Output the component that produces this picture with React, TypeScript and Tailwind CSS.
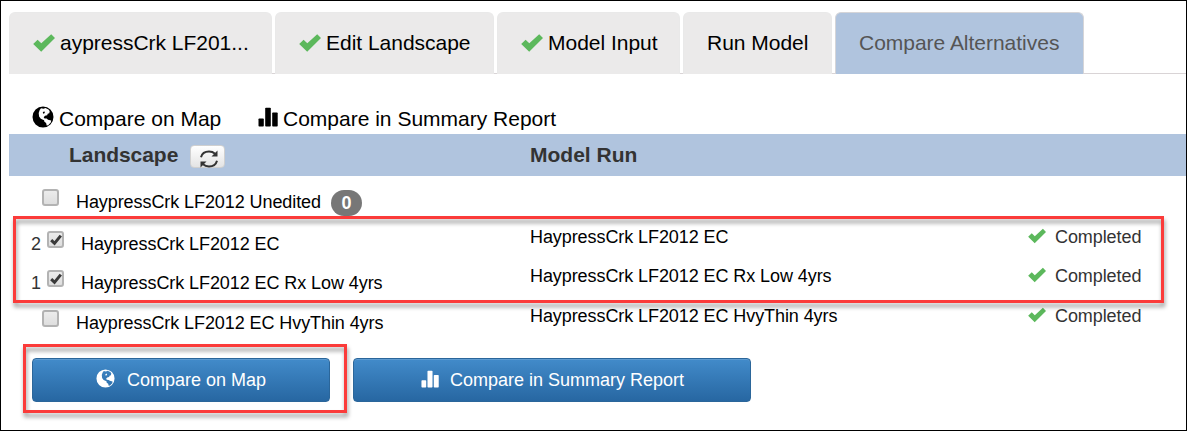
import type { ReactNode } from "react";

function Check({ className }: { className: string }) {
  return (
    <svg viewBox="0 0 22 18" className={className} fill="#5cb85c">
      <path d="M18.2 0.2 22 4 8.2 17.8 0.2 9.9 4.600 5.700 8.300 9.300Z" />
    </svg>
  );
}

function Globe({ className }: { className: string }) {
  return (
    <svg viewBox="0 0 22 22" className={className} fill="currentColor" fillRule="evenodd">
      <path d="M11 .5a10.500 10.500 0 1 0 0 21a10.500 10.500 0 0 0 0-21ZM9 2.300l2.500.5 2-.8 3 1.400 1.200 1.600-.4 2.200-1.600.6-.5 1.500-2.200.4-1.300 1.500.8 1.200 2.200.2 1.300 1.100 3.200.9-.4 1.900-2.600 2.700-1.500.2-.6-2.400-1.700-1.200-.3-1.500-3.300-1.600-1.700-2.300-.4-3.400 1-3ZM12.300 5.300l-1.500.9.4 1.500 1.700-.7Z" />
    </svg>
  );
}

function Bars({ className }: { className: string }) {
  return (
    <svg viewBox="0 0 20 20" className={className} fill="currentColor">
      <rect x="0.500" y="11.500" width="5.300" height="8" rx="0.8" />
      <rect x="7.200" y="0.800" width="5.600" height="18.700" rx="0.8" />
      <rect x="14.200" y="5.500" width="5.500" height="14" rx="0.8" />
    </svg>
  );
}

function Refresh() {
  return (
    <svg viewBox="0 0 20 20" className="h-5 w-5" fill="none" stroke="#333" strokeWidth="2">
      <path d="M2 8.300C3 4.500 6 2.600 10 2.600c2.600 0 4.500.8 6 2.200" />
      <path d="M18 11.700c-1 3.800-4 5.700-8 5.700-2.600 0-4.500-.8-6-2.200" />
      <path d="M18.500 1.500v6h-6Z" fill="#333" stroke="none" />
      <path d="M1.500 18.500v-6h6Z" fill="#333" stroke="none" />
    </svg>
  );
}

function Tab({ width, done, active, children }: { width: string; done?: boolean; active?: boolean; children: ReactNode }) {
  return (
    <div
      className={`${width} flex h-[62px] shrink-0 items-center rounded-t-md border border-b-0 pb-0.5 pl-[23px] text-[21px] ${
        active ? "border-[#d5d5d8] bg-[#b0c4de] text-[#555]" : "border-[#e9e9e9] bg-[#ebeaea] text-black"
      }`}
    >
      {done && <Check className="mr-[5px] h-[18px] w-[22px]" />}
      <span className="tracking-[-0.02px]">{children}</span>
    </div>
  );
}

function Checkbox({ checked }: { checked?: boolean }) {
  return (
    <span className="flex h-[17px] w-[17px] shrink-0 items-center justify-center rounded-[3px] border-2 border-[#b3b3b3] bg-linear-to-b from-[#ececec] to-[#dedede]">
      {checked && (
        <svg viewBox="0 0 12 12" className="h-3 w-3" fill="none" stroke="#3a3a3a" strokeWidth="3">
          <path d="M1.200 6.200 4.500 9.400 10.800 1.600" />
        </svg>
      )}
    </span>
  );
}

type Row = { height: string; order?: string; name: string; badge?: string; run?: string };

const rows: Row[] = [
  { height: "h-[42px]", name: "HaypressCrk LF2012 Unedited", badge: "0" },
  { height: "h-[39px]", order: "2", name: "HaypressCrk LF2012 EC", run: "HaypressCrk LF2012 EC" },
  { height: "h-[40px]", order: "1", name: "HaypressCrk LF2012 EC Rx Low 4yrs", run: "HaypressCrk LF2012 EC Rx Low 4yrs" },
  { height: "h-[40px]", name: "HaypressCrk LF2012 EC HvyThin 4yrs", run: "HaypressCrk LF2012 EC HvyThin 4yrs" },
];

function TableRow({ row }: { row: Row }) {
  return (
    <div className={`${row.height} flex items-start text-[18px] leading-6`}>
      <div className="flex w-[521px] items-start">
        <div className={row.order ? "flex w-[72px] items-start pl-[22px]" : "flex w-[67px] items-start pl-[33px]"}>
          {row.order && <span className="w-4 pt-[7px] text-[#333]">{row.order}</span>}
          <span className="pt-[6px]">
            <Checkbox checked={!!row.order} />
          </span>
        </div>
        <span className="pt-[7px] tracking-[-0.08px]">{row.name}</span>
        {row.badge && (
          <span className="mt-[7px] ml-[10px] flex h-[26px] w-[31px] items-center justify-center rounded-full bg-[#777] font-bold text-white">
            {row.badge}
          </span>
        )}
      </div>
      {row.run && (
        <>
          <span className="w-[498px] tracking-[-0.08px]">{row.run}</span>
          <Check className="mt-[3px] mr-[9px] h-[16px] w-[18px]" />
          <span className="tracking-[-0.08px] text-[#333]">Completed</span>
        </>
      )}
    </div>
  );
}

function ActionButton({ className, children }: { className: string; children: ReactNode }) {
  return (
    <button
      className={`${className} flex h-[44px] items-center rounded-[4px] border border-[#2b669a] bg-linear-to-b from-[#428bca] to-[#2767a2] text-[18px] text-white shadow-[inset_0_1px_0_rgba(255,255,255,0.15)]`}
    >
      {children}
    </button>
  );
}

export default function App() {
  return (
    <div className="relative h-[431px] w-[1187px] overflow-hidden border border-black bg-white pl-2 font-['Liberation_Sans',Arial,sans-serif] whitespace-nowrap text-black">
      <div className="mt-[11px] flex h-[62px] gap-[3px] border-b border-[#d9d4d6]">
        <Tab width="w-[263px]" done>aypressCrk LF201...</Tab>
        <Tab width="w-[219px]" done>Edit Landscape</Tab>
        <Tab width="w-[183px]" done>Model Input</Tab>
        <Tab width="w-[149px]">Run Model</Tab>
        <Tab width="w-[249px]" active>Compare Alternatives</Tab>
      </div>

      <div className="flex h-[60px] items-end pb-[3px] pl-[23px] text-[21px] leading-6">
        <Globe className="mb-[3px] h-[22px] w-[22px]" />
        <span className="ml-[5px] w-[199px]">Compare on Map</span>
        <Bars className="mb-[4px] h-[20px] w-[20px]" />
        <span className="ml-[5px]">Compare in Summary Report</span>
      </div>

      <div className="flex h-[42px] items-center bg-[#b0c4de] text-[21px] font-bold text-[#333]">
        <div className="flex w-[521px] items-center pl-[60px]">
          <span className="tracking-[-0.05px]">Landscape</span>
          <span className="mt-[3px] ml-[12px] flex h-[23px] w-[35px] items-center justify-center rounded-[4px] border border-[#d0d0d0] bg-linear-to-b from-white to-[#e4e4e4] pt-1 pl-0.5">
            <Refresh />
          </span>
        </div>
        <span>Model Run</span>
      </div>

      <div className="pt-[7px]">
        {rows.map((row) => (
          <TableRow key={row.name} row={row} />
        ))}
      </div>

      <div className="flex gap-[23px] pt-[14px] pl-[23px]">
        <ActionButton className="w-[298px] pl-[63px]">
          <Globe className="mr-3 mb-1 h-[19px] w-[19px]" />
          Compare on Map
        </ActionButton>
        <ActionButton className="w-[398px] pl-[67px]">
          <Bars className="mr-[11px] mb-[2px] h-[18px] w-[18px]" />
          Compare in Summary Report
        </ActionButton>
      </div>

      <div className="pointer-events-none absolute top-[215px] left-[12px] h-[87px] w-[1151px] border-3 border-[#fb3b3a] drop-shadow-[1px_4px_2px_rgba(0,0,0,0.4)]" />
      <div className="pointer-events-none absolute top-[343px] left-[22px] h-[69px] w-[324px] border-3 border-[#fb3b3a] drop-shadow-[1px_4px_2px_rgba(0,0,0,0.4)]" />
    </div>
  );
}
